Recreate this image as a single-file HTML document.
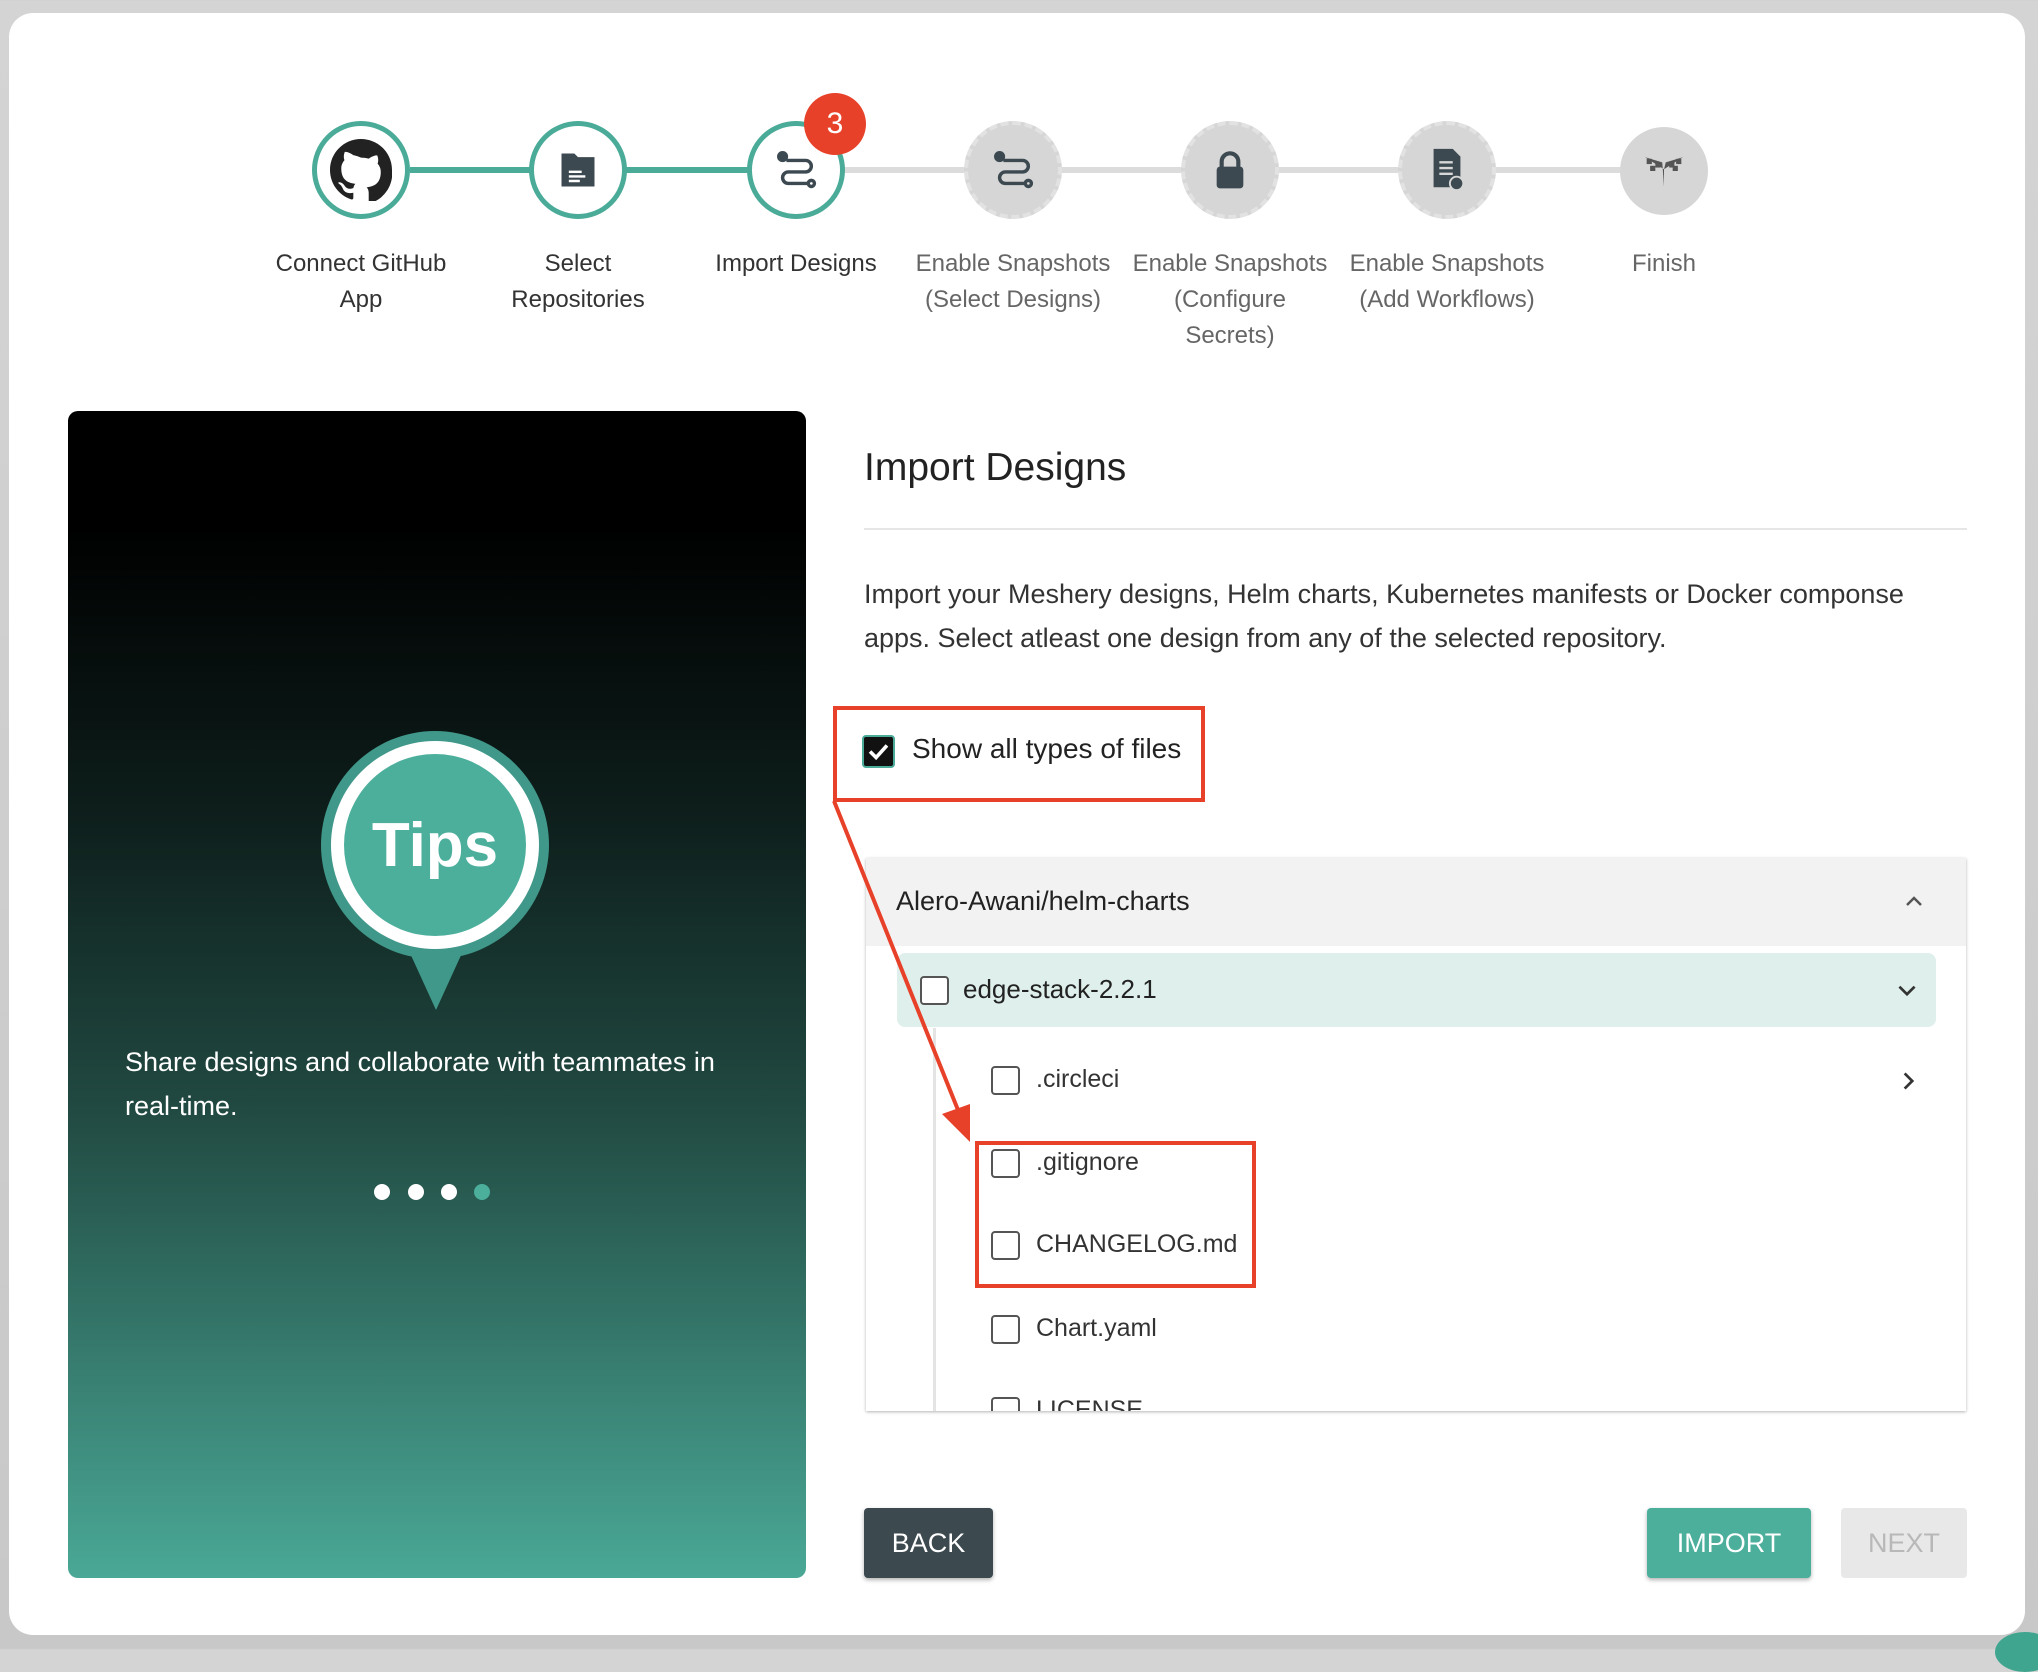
<!DOCTYPE html>
<html><head><meta charset="utf-8"><style>
*{box-sizing:border-box;margin:0;padding:0}
body{width:2038px;height:1649px;background:linear-gradient(#d4d4d4,#c8c8c8);font-family:"Liberation Sans",sans-serif;position:relative;overflow:hidden;color:#222}
.card{position:absolute;left:9px;top:13px;width:2016px;height:1622px;background:#fff;border-radius:24px}
.abs{position:absolute}
.circ{position:absolute;width:98px;height:98px;border-radius:50%;display:flex;align-items:center;justify-content:center}
.done{border:5px solid #4aab98;background:#fff}
.todo{background:#d6d6d6;border:4px dashed #e2e2e2}
.line{position:absolute;height:6px;top:167px}
.lbl{position:absolute;width:210px;text-align:center;font-size:24px;line-height:36px;color:#333;top:246px}
.lbl.g{color:#666}
.cb{position:absolute;width:29px;height:29px;border:2px solid #555;border-radius:4px;background:#fff}
.it{position:absolute;font-size:25px;color:#333}
</style></head><body>
<div class="card"></div>
<div class="line" style="left:410px;width:520px;background:#4aab98"></div>
<div class="line" style="left:840px;width:830px;background:#dcdcdc"></div>
<div class="circ done" style="left:312px;top:121px"><svg width="62" height="62" viewBox="0 0 16 16"><path fill="#222" d="M8 0C3.58 0 0 3.58 0 8c0 3.54 2.29 6.530 5.47 7.59.4.07.55-.17.55-.38v-1.33c-2.23.48-2.7-1.07-2.7-1.07-.36-.92-.89-1.170-.89-1.17-.73-.5.05-.49.05-.49.8.06 1.23.83 1.23.83.72 1.22 1.87.87 2.33.66.07-.52.28-.87.51-1.07-1.78-.2-3.64-.89-3.64-3.95 0-.87.31-1.590.82-2.15-.08-.2-.36-1.02.08-2.12 0 0 .67-.21 2.2.82A7.6 7.6 0 0 1 8 4.8c.68 0 1.36.09 2 .27 1.53-1.04 2.2-.82 2.2-.82.44 1.1.16 1.92.08 2.12.51.56.82 1.27.82 2.15 0 3.07-1.87 3.75-3.65 3.95.29.25.54.73.54 1.48v2.2c0 .21.15.46.55.38A8 8 0 0 0 16 8c0-4.42-3.58-8-8-8z"/></svg></div>
<div class="circ done" style="left:529px;top:121px"><svg width="44" height="44" viewBox="0 0 24 24"><path fill="#3c4950" d="M3 3h7l2 2h9v16H3z"/><path stroke="#fff" stroke-width="1.3" d="M7 13h7M7 15.5h9M7 18h6"/></svg></div>
<div class="circ done" style="left:747px;top:121px"><svg width="46" height="46" viewBox="0 0 24 24" fill="none" stroke="#3c4950" stroke-width="1.8"><circle cx="5" cy="5" r="2" fill="#3c4950"/><path d="M7 7h10a3 3 0 0 1 0 6H8a3 3 0 0 0 0 6h10"/><circle cx="20" cy="19" r="1.6"/></svg></div>
<div class="circ todo" style="left:964px;top:121px"><svg width="46" height="46" viewBox="0 0 24 24" fill="none" stroke="#3c4950" stroke-width="1.8"><circle cx="5" cy="5" r="2" fill="#3c4950"/><path d="M7 7h10a3 3 0 0 1 0 6H8a3 3 0 0 0 0 6h10"/><circle cx="20" cy="19" r="1.6"/></svg></div>
<div class="circ todo" style="left:1181px;top:121px"><svg width="36" height="40" viewBox="0 0 20 24"><path d="M5 11V7a5 5 0 0 1 10 0v4" fill="none" stroke="#3c4950" stroke-width="2.5"/><rect x="2" y="10" width="16" height="13" rx="2" fill="#3c4950"/></svg></div>
<div class="circ todo" style="left:1398px;top:121px"><svg width="40" height="46" viewBox="0 0 20 24"><path fill="#3c4950" d="M3 1h10l4 4v16H3z"/><path stroke="#d6d6d6" stroke-width="1.2" d="M6 8h7M6 11h7M6 14h7"/><circle cx="15" cy="19" r="3.5" fill="#3c4950" stroke="#d6d6d6"/></svg></div>
<div class="circ" style="left:1620px;top:127px;width:88px;height:88px;background:#d6d6d6"><svg width="52" height="36" viewBox="0 0 30 20" fill="#555"><path d="M15 19V9L4 2l10 3zM15 9l11-7-10 3z"/><rect x="5" y="3" width="3" height="3"/><rect x="10" y="5" width="3" height="3"/><rect x="18" y="5" width="3" height="3"/><rect x="22" y="3" width="3" height="3"/><rect x="7" y="7" width="3" height="3"/><rect x="20" y="7" width="3" height="3"/></svg></div>
<div class="abs" style="left:804px;top:93px;width:62px;height:62px;border-radius:50%;background:#e8412a;color:#fff;font-size:30px;display:flex;align-items:center;justify-content:center">3</div>
<div class="lbl" style="left:256px">Connect GitHub<br>App</div>
<div class="lbl" style="left:473px">Select<br>Repositories</div>
<div class="lbl" style="left:691px">Import Designs</div>
<div class="lbl g" style="left:908px">Enable Snapshots<br>(Select Designs)</div>
<div class="lbl g" style="left:1125px">Enable Snapshots<br>(Configure<br>Secrets)</div>
<div class="lbl g" style="left:1342px">Enable Snapshots<br>(Add Workflows)</div>
<div class="lbl g" style="left:1559px">Finish</div>
<div class="abs" style="left:68px;top:411px;width:738px;height:1167px;border-radius:10px;background:linear-gradient(#000 10%,#0e1f1c 35%,#214a42 60%,#4aa896 100%)"></div>
<div class="abs" style="left:321px;top:731px;width:228px;height:228px;border-radius:50%;background:#40988a"></div>
<div class="abs" style="left:404px;top:940px;width:0;height:0;border-left:32px solid transparent;border-right:32px solid transparent;border-top:70px solid #40988a"></div>
<div class="abs" style="left:331px;top:741px;width:208px;height:208px;border-radius:50%;background:#fff"></div>
<div class="abs" style="left:344px;top:754px;width:182px;height:182px;border-radius:50%;background:#4caf9c;color:#fff;font-size:62px;font-weight:bold;display:flex;align-items:center;justify-content:center">Tips</div>
<div class="abs" style="left:125px;top:1040px;width:640px;font-size:27px;line-height:44px;color:#fff">Share designs and collaborate with teammates in real-time.</div>
<div class="abs" style="left:374px;top:1184px;width:16px;height:16px;border-radius:50%;background:#fff"></div>
<div class="abs" style="left:408px;top:1184px;width:16px;height:16px;border-radius:50%;background:#fff"></div>
<div class="abs" style="left:441px;top:1184px;width:16px;height:16px;border-radius:50%;background:#fff"></div>
<div class="abs" style="left:474px;top:1184px;width:16px;height:16px;border-radius:50%;background:#4caf9c"></div>
<div class="abs" style="left:864px;top:446px;font-size:39px;color:#222">Import Designs</div>
<div class="abs" style="left:864px;top:528px;width:1103px;height:2px;background:#e6e6e6"></div>
<div class="abs" style="left:864px;top:572px;width:1110px;font-size:27px;line-height:44px;color:#333">Import your Meshery designs, Helm charts, Kubernetes manifests or Docker componse apps. Select atleast one design from any of the selected repository.</div>
<div class="abs" style="left:833px;top:706px;width:372px;height:96px;border:4px solid #e8412a"></div>
<div class="abs" style="left:862px;top:735px;width:33px;height:33px;border:2px solid #4aab98;border-radius:4px;background:#111"><svg width="29" height="29" viewBox="0 0 24 24"><path d="M5 12l5 5 9-10" fill="none" stroke="#fff" stroke-width="3"/></svg></div>
<div class="abs" style="left:912px;top:733px;font-size:28px;color:#222">Show all types of files</div>
<div class="abs" style="left:866px;top:858px;width:1100px;height:553px;background:#fff;box-shadow:0 1px 3px rgba(0,0,0,.3);overflow:hidden">
 <div class="abs" style="left:0;top:0;width:1100px;height:88px;background:#f2f2f2"></div>
 <div class="abs" style="left:30px;top:28px;font-size:27px;color:#222">Alero-Awani/helm-charts</div>
 <svg class="abs" style="left:1036px;top:32px" width="24" height="24" viewBox="0 0 24 24"><path d="M5 15l7-7 7 7" fill="none" stroke="#555" stroke-width="2.5"/></svg>
 <div class="abs" style="left:31px;top:95px;width:1039px;height:74px;background:#dff0ec;border-radius:8px"></div>
 <div class="cb" style="left:54px;top:118px"></div>
 <div class="abs" style="left:97px;top:116px;font-size:26px;color:#222">edge-stack-2.2.1</div>
 <svg class="abs" style="left:1028px;top:120px" width="26" height="26" viewBox="0 0 24 24"><path d="M5 8l7 7 7-7" fill="none" stroke="#333" stroke-width="2.5"/></svg>
 <div class="abs" style="left:67px;top:170px;width:3px;height:400px;background:#e4e4e4"></div>
 <div class="cb" style="left:125px;top:208px"></div><div class="it" style="left:170px;top:207px">.circleci</div>
 <svg class="abs" style="left:1030px;top:210px" width="26" height="26" viewBox="0 0 24 24"><path d="M8 5l7 7-7 7" fill="none" stroke="#333" stroke-width="2.5"/></svg>
 <div class="cb" style="left:125px;top:291px"></div><div class="it" style="left:170px;top:290px">.gitignore</div>
 <div class="cb" style="left:125px;top:373px"></div><div class="it" style="left:170px;top:372px">CHANGELOG.md</div>
 <div class="cb" style="left:125px;top:457px"></div><div class="it" style="left:170px;top:456px">Chart.yaml</div>
 <div class="cb" style="left:125px;top:539px"></div><div class="it" style="left:170px;top:538px">LICENSE</div>
</div>
<div class="abs" style="left:975px;top:1141px;width:281px;height:147px;border:4px solid #e8412a"></div>
<svg class="abs" style="left:0;top:0" width="2038" height="1649"><line x1="834" y1="801" x2="958" y2="1110" stroke="#e8412a" stroke-width="4"/><path d="M970 1142l-28-28 28-10z" fill="#e8412a"/></svg>
<div class="abs" style="left:864px;top:1508px;width:129px;height:70px;background:#3c494f;border-radius:4px;color:#fff;font-size:27px;display:flex;align-items:center;justify-content:center;box-shadow:0 2px 4px rgba(0,0,0,.3)">BACK</div>
<div class="abs" style="left:1647px;top:1508px;width:164px;height:70px;background:#4caf9c;border-radius:4px;color:#fff;font-size:27px;display:flex;align-items:center;justify-content:center;box-shadow:0 2px 4px rgba(0,0,0,.3)">IMPORT</div>
<div class="abs" style="left:1841px;top:1508px;width:126px;height:70px;background:#e8e8e8;border-radius:4px;color:#b8b8b8;font-size:27px;display:flex;align-items:center;justify-content:center">NEXT</div>
<div class="abs" style="left:1995px;top:1632px;width:60px;height:40px;border-radius:50%;background:#3fa58f"></div>
</body></html>
